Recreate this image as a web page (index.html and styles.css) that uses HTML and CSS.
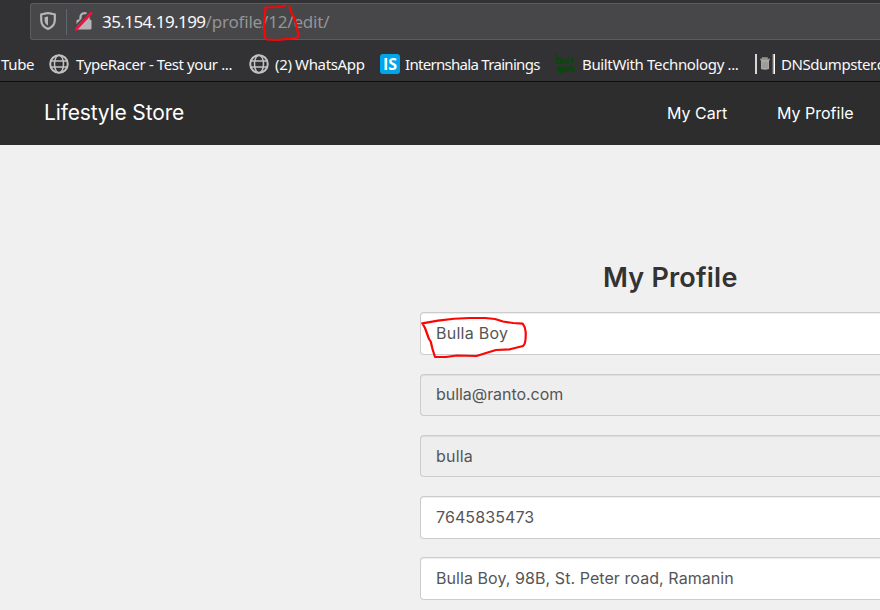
FILE: index.html
```html
<!DOCTYPE html>
<html lang="en">
<head>
<meta charset="utf-8">
<title>Lifestyle Store</title>
<link rel="stylesheet" href="styles.css">
</head>
<body>
<header class="browser">
  <div class="urlbar">
    <svg class="shield" width="16" height="18" viewBox="0 0 16 18"><path d="M8 1.2C10.500 1.200 12.500 2 14.800 2.500V8C14.800 12.500 12 15.400 8 17C4 15.400 1.200 12.500 1.200 8V2.500C3.500 2 5.500 1.200 8 1.200Z" fill="none" stroke="#b6b6b8" stroke-width="2.2"/><path d="M8 4.500V13.500C5.600 12.200 4.600 10.500 4.600 8V5.200C5.800 5 7 4.500 8 4.500Z" fill="#b6b6b8"/></svg>
    <span class="divider"></span>
    <svg class="lock" width="19" height="20" viewBox="0 0 19 20"><path d="M5.500 9V6.200a4 4 0 0 1 8 0V9" fill="none" stroke="#b6b6b8" stroke-width="2.300"/><rect x="1.500" y="8.500" width="15" height="10" rx="1.500" fill="#b6b6b8"/><path d="M-1 17L14.500 1" stroke="#474749" stroke-width="2"/><path d="M.8 18.500L16.300 2.200" stroke="#ff0a3e" stroke-width="2.600" stroke-linecap="round"/></svg>
    <span class="url"><b>35.154.19.199</b><span class="path">/profile/12/edit/</span></span>
  </div>
  <nav class="bookmarks">
    <span class="mark tube"><span>Tube</span></span>
    <span class="mark racer"><svg width="20" height="20" viewBox="0 0 20 20"><g fill="none" stroke="#c2c2c3" stroke-width="1.500"><circle cx="10" cy="10" r="8.800" stroke-width="2"/><ellipse cx="10" cy="10" rx="4.500" ry="8.800"/><path d="M1.500 7H18.500M1.500 13H18.500"/></g></svg><span>TypeRacer - Test your ...</span></span>
    <span class="mark whats"><svg width="20" height="20" viewBox="0 0 20 20"><g fill="none" stroke="#c2c2c3" stroke-width="1.500"><circle cx="10" cy="10" r="8.800" stroke-width="2"/><ellipse cx="10" cy="10" rx="4.500" ry="8.800"/><path d="M1.500 7H18.500M1.500 13H18.500"/></g></svg><span>(2) WhatsApp</span></span>
    <span class="mark intern"><i class="is">IS</i><span>Internshala Trainings</span></span>
    <span class="mark built"><svg width="20" height="20" viewBox="0 0 20 20"><g fill="none" stroke="#0b460e" stroke-width="1.800"><path d="M0 1.500H2V9H6V5H2M8 5V9H11V5M13.500 5V10M13 2.500h1.500M16.800 3V9.500M15.500 5.500H20"/><path d="M3.500 12V18H5.500V12M5.500 18H8V12M10.500 13V18M13 12V18M12 14H15M16.500 11V18M16.500 14.500H19V18" stroke-width="2.200"/></g></svg><span>BuiltWith Technology ...</span></span>
    <span class="mark dns"><svg width="20" height="20" viewBox="0 0 20 20"><path d="M1 0V20M19.200 0V20" stroke="#fff" stroke-width="1.600"/><path d="M17.500 0V20" stroke="#66605c"/><path d="M5 5.500H15M7.500 5V4H12V5" fill="none" stroke="#96928e" stroke-width="1.500"/><path d="M6 6H14V15Q10 16.500 6 15Z" fill="#aaa7a4"/><path d="M8 8V14M10 8V14M12 8V14" stroke="#8b8885" stroke-width=".7"/></svg><span>DNSdumpster.c</span></span>
  </nav>
</header>
<nav class="navbar">
  <span class="brand">Lifestyle Store</span>
  <span class="cart">My Cart</span>
  <span class="profile">My Profile</span>
</nav>
<main>
  <form>
    <h1><span>My Profile</span></h1>
    <div class="field"><span class="name">Bulla Boy</span></div>
    <div class="field disabled"><span class="mail">bulla@ranto.com</span></div>
    <div class="field disabled"><span class="nick">bulla</span></div>
    <div class="field"><span class="phone">7645835473</span></div>
    <div class="field"><span class="address">Bulla Boy, 98B, St. Peter road, Ramanin</span></div>
  </form>
</main>
<svg class="marks" width="880" height="610" viewBox="0 0 880 610"><g fill="none" stroke="#fb0505" stroke-width="2.200" stroke-linecap="round" stroke-linejoin="round"><path d="M285 5.700L278 7L265.500 7.500L264.500 19L264 29L265 37L267 39.500L278 40L290 38.700L298 37.500L298.500 35L296.500 26L294.500 18L291.500 13L289.500 6.500"/><path d="M422.300 323.300L438 320.700Q454 318.300 470 318H485L495 319L503 321.500L513 323L522.700 323.700Q526 328 525.700 333Q526 344 523 346L510 349.300L496 350L486 353L476.500 356L456.700 355.500L446 357L435 357L432.500 349L430.700 341.500L429 339L425 328Z"/></g></svg>
</body>
</html>
```
FILE: styles.css
```css
* { box-sizing: border-box; }
body { margin: 0; width: 880px; height: 610px; overflow: hidden; background: #f0f0f0; font-family: Inter, "Liberation Sans", sans-serif; }
.browser { height: 82px; background: #323234; border-bottom: 1px solid #0c0c0d; font-family: "Noto Sans", "Open Sans", sans-serif; color: #f9f9fa; overflow: hidden; }
.urlbar { display: flex; align-items: center; height: 37px; margin: 3px 0 0 30px; padding-left: 9px; background: #474749; border: 1px solid #5c5c5e; border-right: 0; border-radius: 3px 0 0 3px; }
.shield { margin-top: -1px; }
.divider { width: 1px; height: 26px; margin: 0 8px 0 10px; background: #5f6670; }
.lock { flex: none; margin-top: -1px; }
.url { margin: 1px 0 0 8px; font-size: 17px; line-height: 24px; white-space: nowrap; letter-spacing: -.57px; }
.url b { font-weight: 400; }
.path { color: #949496; letter-spacing: -.18px; }
.bookmarks { display: flex; align-items: center; height: 41px; margin-top: 3px; font-size: 15px; white-space: nowrap; }
.mark { display: flex; align-items: center; flex: none; gap: 6px; height: 24px; letter-spacing: -.35px; }
.mark svg { flex: none; }
.tube { width: 49px; padding-left: 1px; }
.racer { width: 200px; gap: 7px; letter-spacing: -.4px; }
.whats { width: 131px; }
.intern { width: 175px; gap: 5px; letter-spacing: -.7px; }
.built { width: 200px; gap: 7px; }
.dns { width: 125px; overflow: hidden; letter-spacing: -.45px; }
.is { display: block; width: 20px; height: 20px; border-radius: 3px; background: #00a5ec; color: #fff; font: 700 16px/20px "Open Sans", sans-serif; text-align: center; letter-spacing: 0; }
.navbar { display: flex; align-items: center; height: 63px; padding: 0 0 2px 44px; background: #2d2d2d; color: #fff; }
.brand { width: 623px; font-size: 21px; letter-spacing: -.15px; }
.cart { width: 110px; font-size: 16px; }
.profile { font-size: 16px; white-space: nowrap; }
form { width: 460px; margin-left: 420px; padding-top: 113px; }
h1 { margin: 0 0 14.3px; padding-left: 183px; font-size: 27px; line-height: 40px; font-weight: 600; letter-spacing: .2px; color: #333; }
.field { display: flex; align-items: center; height: 42.6px; margin-bottom: 18.65px; padding: 0 0 1px 15px; background: #fff; border: 1px solid #ccc; border-right: 0; border-radius: 4px 0 0 4px; box-shadow: inset 0 1px 1px rgba(0,0,0,.075); color: #555; font-size: 16px; white-space: nowrap; }
.disabled { background: #eee; }
.name { letter-spacing: .25px; }
.mail { letter-spacing: -.05px; }
.nick { letter-spacing: .2px; }
.phone { letter-spacing: .1px; }
.address { letter-spacing: .07px; }
.marks { position: absolute; left: 0; top: 0; }
```
